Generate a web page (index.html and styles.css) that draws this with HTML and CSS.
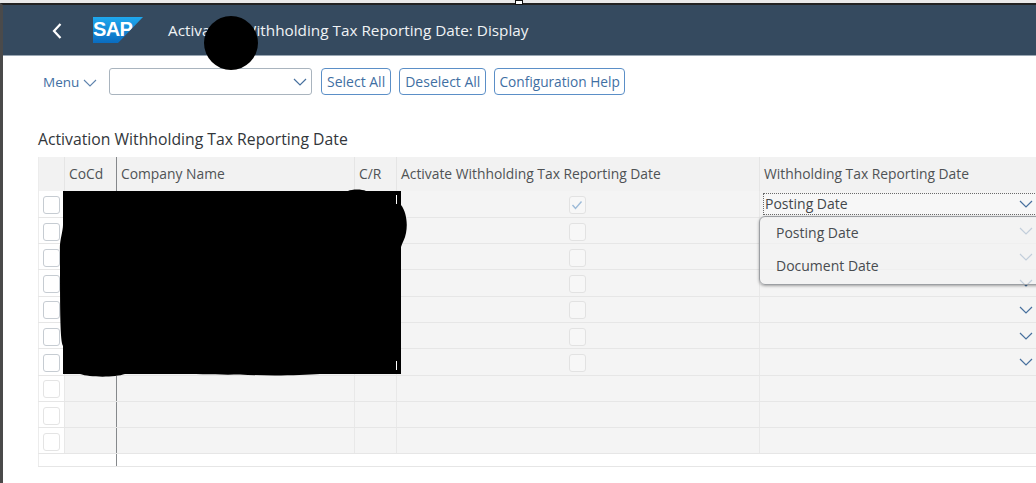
FILE: index.html
```html
<!DOCTYPE html>
<html lang="en">
<head>
    <meta charset="UTF-8">
    <title>Activation Withholding Tax Reporting Date: Display</title>
    <link rel="stylesheet" href="styles.css">
</head>
<body>
    <div class="top-strip"><span class="handle"></span></div>
    <div class="window">
        <header class="shell">
            <svg class="back" width="12" height="18" viewBox="0 0 12 18"><path d="M9.5 2 L3 9 L9.5 16" fill="none" stroke="#fff" stroke-width="2.2"/></svg>
            <div class="logo"><span class="logo-text">SAP</span></div>
            <div class="shell-title">Activation Withholding Tax Reporting Date: Display</div>
        </header>

        <div class="toolbar">
            <span class="menu">Menu
                <svg class="chev" width="14" height="8" viewBox="0 0 14 8"><path d="M1 1 L7 7 L13 1" fill="none" stroke="#5f84ad" stroke-width="1.1"/></svg>
            </span>
            <div class="combo">
                <svg class="chev" width="14" height="8" viewBox="0 0 14 8"><path d="M1 1 L7 7 L13 1" fill="none" stroke="#47709e" stroke-width="1.2"/></svg>
            </div>
            <button class="btn">Select All</button>
            <button class="btn">Deselect All</button>
            <button class="btn btn-help">Configuration Help</button>
        </div>

        <h2 class="section-title">Activation Withholding Tax Reporting Date</h2>

        <div class="table-wrap">
            <table class="grid">
                <colgroup>
                    <col class="c-sel"><col class="c-code"><col class="c-name"><col class="c-cr"><col class="c-act"><col class="c-date">
                </colgroup>
                <thead>
                    <tr><th></th><th class="fixed">CoCd</th><th>Company Name</th><th>C/R</th><th>Activate Withholding Tax Reporting Date</th><th>Withholding Tax Reporting Date</th></tr>
                </thead>
                <tbody>
                    <tr>
                        <td class="sel"><span class="box"></span></td><td class="fixed"></td><td></td><td></td>
                        <td class="mid"><span class="box dim"><svg width="12" height="10" viewBox="0 0 12 10"><path d="M1.5 5 L4.5 8.5 L10.5 1.5" fill="none" stroke="#9dbbd8" stroke-width="1.4"/></svg></span></td>
                        <td class="date">
                            <div class="date-val"><span class="focus">Posting Date</span></div>
                            <div class="popup">
                                <div class="popup-item">Posting Date</div>
                                <div class="popup-item">Document Date</div>
                            </div>
                            <svg class="chev-cell" width="14" height="8" viewBox="0 0 14 8"><path d="M1 1 L7 7 L13 1" fill="none" stroke="#47709e" stroke-width="1.2"/></svg>
                        </td>
                    </tr>
                    <tr>
                        <td class="sel"><span class="box"></span></td><td class="fixed"></td><td></td><td></td>
                        <td class="mid"><span class="box dim"></span></td>
                        <td class="date"><svg class="chev-cell" width="14" height="8" viewBox="0 0 14 8"><path d="M1 1 L7 7 L13 1" fill="none" stroke="#47709e" stroke-width="1.2"/></svg></td>
                    </tr>
                    <tr>
                        <td class="sel"><span class="box"></span></td><td class="fixed"></td><td></td><td></td>
                        <td class="mid"><span class="box dim"></span></td>
                        <td class="date"><svg class="chev-cell" width="14" height="8" viewBox="0 0 14 8"><path d="M1 1 L7 7 L13 1" fill="none" stroke="#47709e" stroke-width="1.2"/></svg></td>
                    </tr>
                    <tr>
                        <td class="sel"><span class="box"></span></td><td class="fixed"></td><td></td><td></td>
                        <td class="mid"><span class="box dim"></span></td>
                        <td class="date"><svg class="chev-cell" width="14" height="8" viewBox="0 0 14 8"><path d="M1 1 L7 7 L13 1" fill="none" stroke="#47709e" stroke-width="1.2"/></svg></td>
                    </tr>
                    <tr>
                        <td class="sel"><span class="box"></span></td><td class="fixed"></td><td></td><td></td>
                        <td class="mid"><span class="box dim"></span></td>
                        <td class="date"><svg class="chev-cell" width="14" height="8" viewBox="0 0 14 8"><path d="M1 1 L7 7 L13 1" fill="none" stroke="#47709e" stroke-width="1.2"/></svg></td>
                    </tr>
                    <tr>
                        <td class="sel"><span class="box"></span></td><td class="fixed"></td><td></td><td></td>
                        <td class="mid"><span class="box dim"></span></td>
                        <td class="date"><svg class="chev-cell" width="14" height="8" viewBox="0 0 14 8"><path d="M1 1 L7 7 L13 1" fill="none" stroke="#47709e" stroke-width="1.2"/></svg></td>
                    </tr>
                    <tr>
                        <td class="sel"><span class="box"></span></td><td class="fixed"></td><td></td><td></td>
                        <td class="mid"><span class="box dim"></span></td>
                        <td class="date"><svg class="chev-cell" width="14" height="8" viewBox="0 0 14 8"><path d="M1 1 L7 7 L13 1" fill="none" stroke="#47709e" stroke-width="1.2"/></svg></td>
                    </tr>
                    <tr class="empty"><td class="sel"><span class="box"></span></td><td class="fixed"></td><td></td><td></td><td></td><td></td></tr>
                    <tr class="empty"><td class="sel"><span class="box"></span></td><td class="fixed"></td><td></td><td></td><td></td><td></td></tr>
                    <tr class="empty"><td class="sel"><span class="box"></span></td><td class="fixed"></td><td></td><td></td><td></td><td></td></tr>
                    <tr class="tail"><td></td><td class="fixed"></td><td colspan="4"></td></tr>
                </tbody>
            </table>
        </div>

        <!-- scribbled out parts of the screenshot -->
        <div class="blot"></div>
        <svg class="scribble" width="360" height="190" viewBox="0 0 360 190">
            <path d="M13 0 H298 C302 -2 312 -2 316 0 H351 V14 C356 20 358 32 356 42 C355 48 352 52 351 56 V183 H270 C250 184.5 215 185 190 183.5 C170 184 150 183 125 183 C110 183 85 183 75 183 C65 186.5 40 186.5 30 183 H13 V155 C10 150 10 120 10 60 C9 52 13 40 13 34 Z" fill="#000"/>
            <rect x="346" y="4" width="1" height="9" fill="#fff"/>
            <rect x="346" y="170" width="1" height="9" fill="#fff"/>
        </svg>
    </div>
</body>
</html>
```

FILE: styles.css
```css
* {
    box-sizing: border-box;
}
html, body {
    margin: 0;
    height: 100%;
    overflow: hidden;
    background: #fff;
}
body {
    font-family: "Open Sans", "Noto Sans", Arial, sans-serif;
    color: #32363a;
}
.top-strip {
    position: relative;
    height: 3px;
    background: #e9e9e9;
}
.handle {
    position: absolute;
    left: 515px;
    top: 0;
    width: 8px;
    height: 5px;
    z-index: 3;
    background: #fff;
    border: 1px solid #111;
}
.window {
    position: relative;
    height: 480px;
    border-top: 2px solid #222;
    border-left: 3px solid #4a4a4a;
}
.shell {
    height: 51px;
    background: #354a5f;
    border-bottom: 1px solid #9aa7b3;
    display: flex;
    align-items: center;
    padding-left: 48px;
}
.back {
    margin-right: 30px;
    margin-top: 1px;
}
.logo {
    width: 50px;
    height: 26px;
    background: linear-gradient(180deg, #1fa8ee, #0a6cc0);
    clip-path: polygon(0 0, 100% 0, 50% 100%, 0 100%);
}
.logo-text {
    display: block;
    font-family: "Liberation Sans", Arial, sans-serif;
    font-weight: bold;
    font-size: 20px;
    line-height: 25px;
    letter-spacing: -0.7px;
    color: #fff;
}
.shell-title {
    margin-left: 25px;
    font-size: 15.3px;
    color: #f0f3f5;
}
.toolbar {
    height: 52px;
    display: flex;
    align-items: center;
    padding-left: 40px;
    padding-bottom: 1px;
}
.menu {
    display: flex;
    align-items: center;
    gap: 4px;
    font-size: 13.5px;
    color: #3f6fa3;
    width: 66px;
}
.menu .chev {
    margin-top: 2px;
}
.combo {
    width: 203px;
    height: 27px;
    border: 1px solid #a9b4be;
    border-radius: 3px;
    display: flex;
    align-items: center;
    justify-content: flex-end;
    padding-right: 4px;
    margin-right: 9px;
}
.btn {
    height: 27px;
    padding: 0 5px;
    margin-right: 8px;
    font: 14px "Open Sans", "Noto Sans", Arial, sans-serif;
    color: #3f6fa3;
    background: #fff;
    border: 1px solid #5b8fc7;
    border-radius: 4px;
}
.btn-help {
    font-size: 13.7px;
    padding: 0 4px;
}
.section-title {
    margin: 20px 0 0 35px;
    height: 29px;
    font-size: 15.75px;
    line-height: 22px;
    font-weight: normal;
    color: #32363a;
}
.table-wrap {
    margin-left: 35px;
}
.grid {
    width: 998px;
    table-layout: fixed;
    border-collapse: collapse;
    border-left: 1px solid #ececec;
    font-size: 13.85px;
}
.c-sel { width: 26px; }
.c-code { width: 52px; }
.c-name { width: 238px; }
.c-cr { width: 42px; }
.c-act { width: 363px; }
.c-date { width: 277px; }
.grid th {
    height: 34px;
    padding: 0 4px 2px;
    background: #f2f2f2;
    border-right: 1px solid #e5e5e5;
    text-align: left;
    font-weight: normal;
    color: #4f5255;
}
.grid td {
    height: 26.3px;
    padding: 0;
    background: #f4f4f4;
    border-right: 1px solid #e8e8e8;
    border-bottom: 1px solid #e6e6e6;
}
.grid th.fixed, .grid td.fixed {
    border-right: 1px solid #85888b;
}
.grid td.sel {
    background: #fff;
    text-align: center;
}
.grid td.mid {
    text-align: center;
    padding-right: 2px;
}
.box {
    display: inline-flex;
    align-items: center;
    justify-content: center;
    width: 17px;
    height: 18px;
    vertical-align: middle;
    background: #fff;
    border: 1px solid #c6ccd2;
    border-radius: 3px;
}
.box.dim {
    background: #f7f7f7;
    border-color: #e2e2e2;
}
.empty .box {
    border-color: #e4e4e4;
}
.grid td.date {
    position: relative;
    padding-left: 3px;
}
.chev-cell {
    position: absolute;
    right: 3px;
    top: 9px;
}
.date-val {
    height: 22px;
    margin-top: 1px;
    margin-right: -3px;
    border: 1px dotted #6a6a6a;
    background: #f7f7f7;
    font-size: 14px;
    line-height: 20px;
    padding-left: 1px;
    color: #43474b;
}
.popup {
    position: absolute;
    z-index: 2;
    left: -1px;
    top: 25px;
    width: 290px;
    height: 69px;
    padding-top: 1px;
    background: rgba(243, 243, 243, 0.72);
    border: 1px solid #9c9fa3;
    border-radius: 6px 0 0 6px;
    box-shadow: 0 1px 3px rgba(0, 0, 0, 0.35);
}
.popup-item {
    height: 33px;
    line-height: 30px;
    padding-left: 16px;
    font-size: 14px;
    color: #484c50;
}
.grid .tail td {
    height: 13px;
    background: #fff;
    border-right: 0;
}
.grid .tail td.fixed {
    border-right: 1px solid #85888b;
}
.blot {
    position: absolute;
    left: 201px;
    top: 11px;
    width: 54px;
    height: 54px;
    border-radius: 50%;
    background: #000;
}
.scribble {
    position: absolute;
    left: 47px;
    top: 186px;
    overflow: visible;
}
```
